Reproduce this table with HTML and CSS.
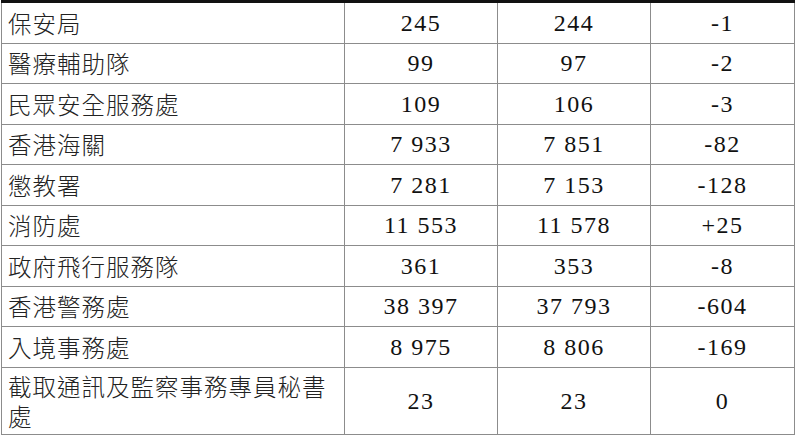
FILE: index.html
```
<!DOCTYPE html>
<html>
<head>
<meta charset="utf-8">
<title>表</title>
<link rel="stylesheet" href="styles.css">
</head>
<body>
<table class="staff-table">
  <colgroup>
    <col class="c-name">
    <col class="c-num">
    <col class="c-num">
    <col class="c-diff">
  </colgroup>
  <tbody>
    <tr><td class="name">保安局</td><td class="num">245</td><td class="num">244</td><td class="num">-1</td></tr>
    <tr><td class="name">醫療輔助隊</td><td class="num">99</td><td class="num">97</td><td class="num">-2</td></tr>
    <tr><td class="name">民眾安全服務處</td><td class="num">109</td><td class="num">106</td><td class="num">-3</td></tr>
    <tr><td class="name">香港海關</td><td class="num">7 933</td><td class="num">7 851</td><td class="num">-82</td></tr>
    <tr><td class="name">懲教署</td><td class="num">7 281</td><td class="num">7 153</td><td class="num">-128</td></tr>
    <tr><td class="name">消防處</td><td class="num">11 553</td><td class="num">11 578</td><td class="num">+25</td></tr>
    <tr><td class="name">政府飛行服務隊</td><td class="num">361</td><td class="num">353</td><td class="num">-8</td></tr>
    <tr><td class="name">香港警務處</td><td class="num">38 397</td><td class="num">37 793</td><td class="num">-604</td></tr>
    <tr><td class="name">入境事務處</td><td class="num">8 975</td><td class="num">8 806</td><td class="num">-169</td></tr>
    <tr class="tall"><td class="name">截取通訊及監察事務專員秘書處</td><td class="num">23</td><td class="num">23</td><td class="num">0</td></tr>
  </tbody>
</table>
</body>
</html>
```
FILE: styles.css
```
html, body {
  margin: 0;
  padding: 0;
  background: #ffffff;
}

.staff-table {
  margin-left: 1px;
  width: 794px;
  border-collapse: collapse;
  table-layout: fixed;
  border-top: 3px solid #111111;
  color: #1c1c1c;
  font-size: 24px;
}

.c-name { width: 343px; }
.c-num { width: 153px; }
.c-diff { width: 144px; }

.staff-table td {
  border: 1px solid #8c8c8c;
  height: 39.5px;
  padding: 0 6px;
  vertical-align: middle;
  line-height: 30px;
}

.staff-table td.name {
  font-family: "Noto Sans CJK TC", sans-serif;
  font-weight: 300;
  letter-spacing: 1px;
  font-size: 23.5px;
  color: #222222;
}

.staff-table td.num {
  font-family: "Liberation Serif", "Times New Roman", Tinos, serif;
  text-align: center;
  letter-spacing: 1.5px;
  color: #111111;
}

.staff-table tr.tall td {
  height: 66px;
}
```
